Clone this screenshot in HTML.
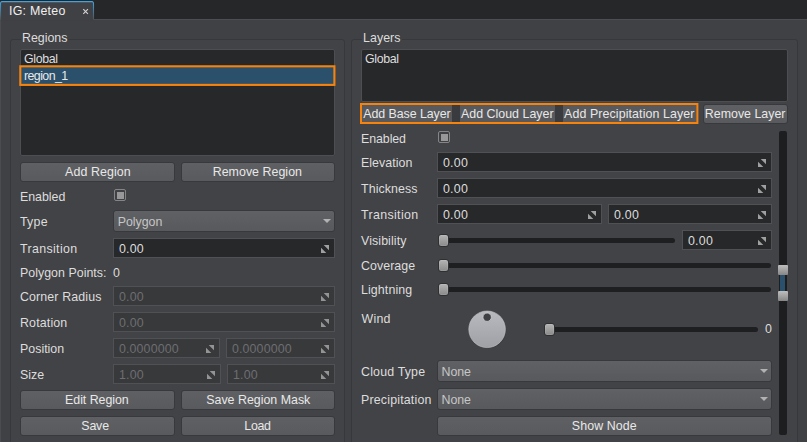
<!DOCTYPE html>
<html><head><meta charset="utf-8"><title>IG: Meteo</title>
<style>
html,body{margin:0;padding:0;}
body{width:807px;height:442px;overflow:hidden;background:#404144;position:relative;
 font-family:"Liberation Sans",sans-serif;font-size:12.4px;color:#dcdcdc;}
.a{position:absolute;box-sizing:border-box;}
.t{white-space:nowrap;line-height:14px;height:14px;}
.topbar{left:0;top:0;width:807px;height:19px;background:#262729;}
.lstrip{left:0;top:20px;width:1px;height:422px;background:#4b4c4f;}
.gb{border:1px solid #37383b;border-radius:3px;background:#424346;}
.gt{background:#414245;}
.list{background:#27282a;border:1px solid #4d4e51;border-radius:2px;}
.sel{background:#2a506c;}
.btn{background:linear-gradient(#5f6063,#595a5d);border:1px solid #38393c;border-radius:3px;}
.fb{background:#58595c;}
.cb{border:1px solid #858587;border-radius:2px;width:12px;height:12px;background:#404144;}
.cb i{position:absolute;left:1.5px;top:1.5px;width:7px;height:7px;background:#98989a;display:block;}
.dd{background:linear-gradient(#606164,#58595c);border:1px solid #38393c;border-radius:3px;}
.dd:after{content:"";position:absolute;right:3.5px;top:8px;border-left:4px solid transparent;border-right:4px solid transparent;border-top:4.5px solid #b2b2b2;}
.in{background:#27282a;border:1px solid #505154;}
.in.dis{background:#38393b;}
.in svg{position:absolute;right:5px;top:6px;fill:#a0a0a0;}
.in.dis svg{fill:#949494;}
.trk{background:#1e1f20;border-radius:2.5px;height:5px;}
.hnd{width:11px;height:13px;border-radius:3px;background:linear-gradient(#b4b4b4,#8a8a8a);border:1px solid #2f3032;box-shadow:inset 0 0 0 1px rgba(255,255,255,.10);}
.sh{width:10px;height:10px;background:linear-gradient(#bebebe,#868686);border-radius:1px;}
</style></head><body>
<div class="a topbar"></div>
<div class="a" style="left:0;top:19px;width:807px;height:1px;background:#4d4e51"></div>
<div class="a lstrip"></div>
<svg class="a" style="left:0;top:0" width="110" height="24"><defs><linearGradient id="tg" x1="0" y1="0" x2="0" y2="1"><stop offset="0" stop-color="#45a3dc"/><stop offset="0.25" stop-color="#3f8fc4"/><stop offset="1" stop-color="#505256"/></linearGradient></defs><path d="M0.5 21V3.5Q0.5 1.5 2.5 1.5H91.5Q93.5 1.5 93.5 3.5V20.5H0.5z" fill="#404144"/><path d="M0.5 20V3.5Q0.5 1.5 2.5 1.5H91.5Q93.5 1.5 93.5 3.5V19.5" fill="none" stroke="url(#tg)" stroke-width="1.1"/><path d="M1.5 1.6H92.5" stroke="#45a3dc" stroke-width="1.3" fill="none"/><path d="M83.3 9.2L87.9 13.8M87.9 9.2L83.3 13.8" stroke="#d2d2d2" stroke-width="1.15" fill="none"/></svg>
<div class="a gb" style="left:10px;top:39px;width:335px;height:420px"></div>
<div class="a gt" style="left:21px;top:38px;width:47px;height:3px"></div>
<div class="a list" style="left:20px;top:49px;width:315px;height:107px"><div class="a sel" style="left:0;top:17px;width:313px;height:18px"></div><span class="a t" style="left:3.00px;top:2px;letter-spacing:-0.344px;color:#dddddd">Global</span><span class="a t" style="left:3.00px;top:19px;letter-spacing:-0.575px;color:#e8e8e8">region_1</span></div>
<svg class="a" style="left:0;top:0" width="807" height="442"><rect x="20.3" y="66.3" width="314.1" height="18.6" fill="none" stroke="#f6830d" stroke-width="2.1"/></svg>
<div class="a btn" style="left:20px;top:162px;width:155px;height:20px"><span class="a t" style="left:44.12px;top:2px;letter-spacing:0.086px;color:#e8e8e8">Add Region</span></div>
<div class="a btn" style="left:181px;top:162px;width:154px;height:20px"><span class="a t" style="left:30.70px;top:2px;letter-spacing:0.036px;color:#e8e8e8">Remove Region</span></div>
<div class="a cb" style="left:114px;top:189px"><i></i></div>
<div class="a dd" style="left:113px;top:210px;width:222px;height:22px"><span class="a t" style="left:3.80px;top:4px;letter-spacing:-0.044px;color:#c6c6c6">Polygon</span></div>
<div class="a in" style="left:113px;top:238px;width:222px;height:20px"><svg width="8" height="8"><path d="M2.7 0H8V5.3zM0 2.7V8H5.3z"/></svg><span class="a t" style="left:5.00px;top:3px;letter-spacing:0.198px;color:#dddddd">0.00</span></div>
<div class="a in dis" style="left:113px;top:286px;width:222px;height:20px"><svg width="8" height="8"><path d="M2.7 0H8V5.3zM0 2.7V8H5.3z"/></svg><span class="a t" style="left:5.00px;top:3px;letter-spacing:0.198px;color:#6d6e71">0.00</span></div>
<div class="a in dis" style="left:113px;top:312px;width:222px;height:20px"><svg width="8" height="8"><path d="M2.7 0H8V5.3zM0 2.7V8H5.3z"/></svg><span class="a t" style="left:5.00px;top:3px;letter-spacing:0.198px;color:#6d6e71">0.00</span></div>
<div class="a in dis" style="left:113px;top:338px;width:107px;height:20px"><svg width="8" height="8"><path d="M2.7 0H8V5.3zM0 2.7V8H5.3z"/></svg><span class="a t" style="left:5.00px;top:3px;letter-spacing:0.125px;color:#6d6e71">0.0000000</span></div>
<div class="a in dis" style="left:226px;top:338px;width:109px;height:20px"><svg width="8" height="8"><path d="M2.7 0H8V5.3zM0 2.7V8H5.3z"/></svg><span class="a t" style="left:5.00px;top:3px;letter-spacing:0.125px;color:#6d6e71">0.0000000</span></div>
<div class="a in dis" style="left:113px;top:364px;width:108px;height:20px"><svg width="8" height="8"><path d="M2.7 0H8V5.3zM0 2.7V8H5.3z"/></svg><span class="a t" style="left:5.00px;top:3px;letter-spacing:0.198px;color:#6d6e71">1.00</span></div>
<div class="a in dis" style="left:227px;top:364px;width:108px;height:20px"><svg width="8" height="8"><path d="M2.7 0H8V5.3zM0 2.7V8H5.3z"/></svg><span class="a t" style="left:5.00px;top:3px;letter-spacing:0.198px;color:#6d6e71">1.00</span></div>
<div class="a btn" style="left:20px;top:390px;width:155px;height:20px"><span class="a t" style="left:44.10px;top:2px;letter-spacing:-0.043px;color:#e8e8e8">Edit Region</span></div>
<div class="a btn" style="left:181px;top:390px;width:154px;height:20px"><span class="a t" style="left:24.28px;top:2px;letter-spacing:0.002px;color:#e8e8e8">Save Region Mask</span></div>
<div class="a btn" style="left:20px;top:416px;width:155px;height:20px"><span class="a t" style="left:60.28px;top:2px;letter-spacing:-0.149px;color:#e8e8e8">Save</span></div>
<div class="a btn" style="left:181px;top:416px;width:154px;height:20px"><span class="a t" style="left:62.30px;top:2px;letter-spacing:-0.300px;color:#e8e8e8">Load</span></div>
<div class="a gb" style="left:351px;top:39px;width:447px;height:420px"></div>
<div class="a gt" style="left:362px;top:38px;width:40px;height:3px"></div>
<div class="a list" style="left:361px;top:49px;width:427px;height:53px"><span class="a t" style="left:3.00px;top:2px;letter-spacing:-0.344px;color:#dddddd">Global</span></div>
<div class="a" style="left:361px;top:104px;width:337px;height:19px;background:#3a3b3e"></div>
<div class="a fb" style="left:362px;top:105px;width:90px;height:17px"><span class="a t" style="left:1.22px;top:2px;letter-spacing:-0.057px;color:#e8e8e8">Add Base Layer</span></div>
<div class="a fb" style="left:460px;top:105px;width:95px;height:17px"><span class="a t" style="left:1.02px;top:2px;letter-spacing:0.017px;color:#e8e8e8">Add Cloud Layer</span></div>
<div class="a fb" style="left:563px;top:105px;width:134px;height:17px"><span class="a t" style="left:1.02px;top:2px;letter-spacing:0.107px;color:#e8e8e8">Add Precipitation Layer</span></div>
<svg class="a" style="left:0;top:0" width="807" height="442"><rect x="361" y="104" width="336.4" height="19" fill="none" stroke="#f6830d" stroke-width="2"/></svg>
<div class="a btn" style="left:703px;top:104px;width:85px;height:20px"><span class="a t" style="left:0.80px;top:2px;letter-spacing:0.008px;color:#e8e8e8">Remove Layer</span></div>
<div class="a cb" style="left:438px;top:131px"><i></i></div>
<div class="a in" style="left:437px;top:152px;width:335px;height:20px"><svg width="8" height="8"><path d="M2.7 0H8V5.3zM0 2.7V8H5.3z"/></svg><span class="a t" style="left:5.00px;top:3px;letter-spacing:0.231px;color:#dddddd">0.00</span></div>
<div class="a in" style="left:437px;top:178px;width:335px;height:20px"><svg width="8" height="8"><path d="M2.7 0H8V5.3zM0 2.7V8H5.3z"/></svg><span class="a t" style="left:5.00px;top:3px;letter-spacing:0.231px;color:#dddddd">0.00</span></div>
<div class="a in" style="left:437px;top:204px;width:165px;height:20px"><svg width="8" height="8"><path d="M2.7 0H8V5.3zM0 2.7V8H5.3z"/></svg><span class="a t" style="left:5.00px;top:3px;letter-spacing:0.231px;color:#dddddd">0.00</span></div>
<div class="a in" style="left:608px;top:204px;width:164px;height:20px"><svg width="8" height="8"><path d="M2.7 0H8V5.3zM0 2.7V8H5.3z"/></svg><span class="a t" style="left:5.00px;top:3px;letter-spacing:0.231px;color:#dddddd">0.00</span></div>
<div class="a trk" style="left:441px;top:238px;width:234px"></div>
<div class="a hnd" style="left:438px;top:234px"></div>
<div class="a in" style="left:682px;top:230px;width:90px;height:20px"><svg width="8" height="8"><path d="M2.7 0H8V5.3zM0 2.7V8H5.3z"/></svg><span class="a t" style="left:5.00px;top:3px;letter-spacing:0.231px;color:#dddddd">0.00</span></div>
<div class="a trk" style="left:441px;top:263px;width:330px"></div>
<div class="a hnd" style="left:438px;top:259px"></div>
<div class="a trk" style="left:441px;top:287px;width:330px"></div>
<div class="a hnd" style="left:438px;top:283px"></div>
<svg class="a" style="left:466px;top:308px" width="43" height="43"><defs><linearGradient id="kg" x1="0" y1="0" x2="0" y2="1"><stop offset="0" stop-color="#b9babf"/><stop offset="1" stop-color="#9fa0a5"/></linearGradient></defs><circle cx="21.8" cy="22.0" r="18.5" fill="#2c2d2f" opacity="0.35"/><circle cx="21.1" cy="21.3" r="18.3" fill="url(#kg)" stroke="#c4c5c9" stroke-width="0.6"/><circle cx="21.15" cy="9.2" r="4.2" fill="#3f4043" stroke="#d2d3d7" stroke-width="0.8"/></svg>
<div class="a trk" style="left:547px;top:327px;width:211px"></div>
<div class="a hnd" style="left:544px;top:323px"></div>
<div class="a dd" style="left:437px;top:360px;width:335px;height:22px"><span class="a t" style="left:3.60px;top:4px;letter-spacing:-0.105px;color:#c6c6c6">None</span></div>
<div class="a dd" style="left:437px;top:388px;width:335px;height:22px"><span class="a t" style="left:3.60px;top:4px;letter-spacing:-0.105px;color:#c6c6c6">None</span></div>
<div class="a btn" style="left:437px;top:416px;width:335px;height:20px"><span class="a t" style="left:133.78px;top:2px;letter-spacing:0.107px;color:#e8e8e8">Show Node</span></div>
<div class="a" style="left:779px;top:131px;width:8px;height:304px;background:#1d1e1f;border-radius:2px"></div>
<div class="a" style="left:780px;top:275px;width:5px;height:16px;background:#2a506c"></div>
<div class="a sh" style="left:778px;top:265px"></div>
<div class="a sh" style="left:778px;top:291px"></div>
<div class="a t" style="left:9.00px;top:4px;letter-spacing:0.238px;color:#efefef">IG: Meteo</div>
<div class="a t" style="left:22.00px;top:31px;letter-spacing:-0.003px;color:#dddddd">Regions</div>
<div class="a t" style="left:20.00px;top:190px;letter-spacing:-0.028px;color:#dddddd">Enabled</div>
<div class="a t" style="left:20.00px;top:215px;letter-spacing:0.237px;color:#dddddd">Type</div>
<div class="a t" style="left:20.00px;top:242px;letter-spacing:0.360px;color:#dddddd">Transition</div>
<div class="a t" style="left:20.00px;top:266px;letter-spacing:0.026px;color:#dddddd">Polygon Points:</div>
<div class="a t" style="left:113.00px;top:266px;letter-spacing:0.000px;color:#dddddd">0</div>
<div class="a t" style="left:20.00px;top:290px;letter-spacing:0.123px;color:#dddddd">Corner Radius</div>
<div class="a t" style="left:20.00px;top:316px;letter-spacing:0.153px;color:#dddddd">Rotation</div>
<div class="a t" style="left:20.00px;top:342px;letter-spacing:0.010px;color:#dddddd">Position</div>
<div class="a t" style="left:20.00px;top:368px;letter-spacing:0.046px;color:#dddddd">Size</div>
<div class="a t" style="left:363.00px;top:31px;letter-spacing:0.050px;color:#dddddd">Layers</div>
<div class="a t" style="left:361.00px;top:132px;letter-spacing:-0.078px;color:#dddddd">Enabled</div>
<div class="a t" style="left:361.00px;top:156px;letter-spacing:0.042px;color:#dddddd">Elevation</div>
<div class="a t" style="left:361.00px;top:182px;letter-spacing:0.083px;color:#dddddd">Thickness</div>
<div class="a t" style="left:361.00px;top:208px;letter-spacing:0.360px;color:#dddddd">Transition</div>
<div class="a t" style="left:361.00px;top:234px;letter-spacing:0.098px;color:#dddddd">Visibility</div>
<div class="a t" style="left:361.00px;top:259px;letter-spacing:0.055px;color:#dddddd">Coverage</div>
<div class="a t" style="left:361.00px;top:283px;letter-spacing:0.104px;color:#dddddd">Lightning</div>
<div class="a t" style="left:361.50px;top:312px;letter-spacing:0.237px;color:#dddddd">Wind</div>
<div class="a t" style="left:765.00px;top:322px;letter-spacing:0.000px;color:#dddddd">0</div>
<div class="a t" style="left:361.00px;top:365px;letter-spacing:0.178px;color:#dddddd">Cloud Type</div>
<div class="a t" style="left:361.00px;top:393px;letter-spacing:0.181px;color:#dddddd">Precipitation</div>
</body></html>
